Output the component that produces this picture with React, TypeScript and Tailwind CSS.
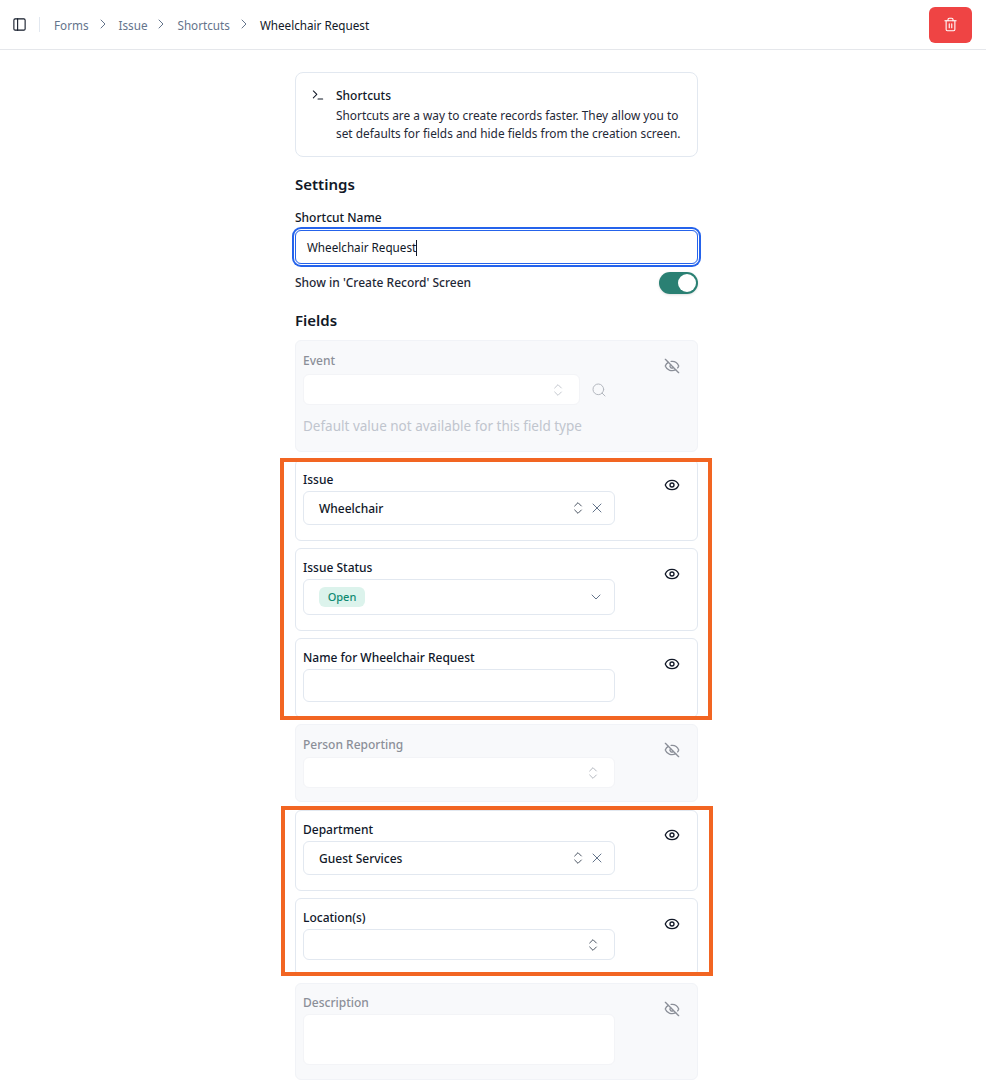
import { ChevronDown, ChevronRight, ChevronsUpDown, Eye, EyeOff, PanelLeft, Search, Terminal, Trash2, X } from "lucide-react";
import type { ReactNode } from "react";

function Crumb({ label, last }: { label: string; last?: boolean }) {
  if (last) return <span className="mt-[3px] text-[11.7px] text-[#111827]">{label}</span>;
  return (
    <>
      <span className="mt-[3px] text-[11.7px] text-[#64748b]">{label}</span>
      <ChevronRight size={16} strokeWidth={1.5} className="ml-[6px] mr-[8px] -mt-px text-[#64748b]" />
    </>
  );
}

function FieldCard({
  label,
  hidden,
  className,
  eyeClass,
  children,
}: {
  label: string;
  hidden?: boolean;
  className: string;
  eyeClass: string;
  children: ReactNode;
}) {
  const Icon = hidden ? EyeOff : Eye;
  return (
    <div
      className={`flex justify-between rounded-md border pl-[7px] pr-[17px] ${
        hidden ? "border-[#f1f3f7] bg-[#f8f9fb]" : "border-[#e2e8f0] bg-white"
      } ${className}`}
    >
      <div className="w-[312px]">
        <div className={`text-[12px] leading-[19px] font-medium ${hidden ? "text-[#8b8f98]" : "text-[#0f172a]"}`}>{label}</div>
        {children}
      </div>
      <Icon size={16} strokeWidth={2} className={`${eyeClass} ${hidden ? "text-[#8b8f98]" : "text-[#111827]"}`} />
    </div>
  );
}

function SelectBox({
  className,
  disabled,
  children,
}: {
  className: string;
  disabled?: boolean;
  children?: ReactNode;
}) {
  return (
    <div
      className={`flex items-center rounded-md border bg-white ${
        disabled ? "border-[#f3f4f7]" : "border-[#e2e8f0]"
      } ${className}`}
    >
      {children}
    </div>
  );
}

export default function App() {
  return (
    <div className="min-h-screen bg-white font-['Noto_Sans',sans-serif] text-[#111827]">
      <header className="flex h-[50px] items-center border-b border-[#e5e7eb] pl-[12px] pr-[14px]">
        <PanelLeft size={15} strokeWidth={1.75} className="text-[#111827]" />
        <div className="mx-[12px] h-[15px] w-px bg-[#e2e8f0]" />
        <nav className="ml-[2px] flex items-center">
          <Crumb label="Forms" />
          <Crumb label="Issue" />
          <Crumb label="Shortcuts" />
          <Crumb label="Wheelchair Request" last />
        </nav>
        <button className="ml-auto flex h-[36px] w-[43px] items-center justify-center rounded-md bg-[#ef4444]">
          <Trash2 size={15} strokeWidth={1.75} className="text-white" />
        </button>
      </header>

      <main className="relative ml-[295px] w-[403px] pt-[22px] pb-[4px]">
        <div className="flex h-[85px] rounded-lg border border-[#e2e8f0] pl-[15px] pt-[14px]">
          <Terminal size={14} strokeWidth={1.75} className="mt-px shrink-0 text-[#111827]" />
          <div className="ml-[11px] text-[11.85px] leading-[18px]">
            <div className="mb-px text-[12px] font-medium">Shortcuts</div>
            <div className="whitespace-nowrap text-[#1f2937]">Shortcuts are a way to create records faster. They allow you to</div>
            <div className="whitespace-nowrap text-[#1f2937]">set defaults for fields and hide fields from the creation screen.</div>
          </div>
        </div>

        <h2 className="mt-[16px] text-[15px] leading-[22px] font-semibold">Settings</h2>
        <div className="mt-[14px] text-[12px] leading-[18px] font-medium">Shortcut Name</div>
        <div className="mt-[3px] flex h-[34px] items-center rounded-md border border-[#2563eb] pl-[11px] pt-[2px] text-[11.7px] shadow-[0_0_0_1px_white,0_0_0_3px_#2563eb]">
          Wheelchair Request
          <span className="h-[16px] w-px bg-[#111827]" />
        </div>
        <div className="mt-[8px] flex items-center justify-between">
          <span className="text-[12px] font-medium text-[#1f2937]">Show in 'Create Record' Screen</span>
          <div className="flex h-[22px] w-[39px] items-center justify-end rounded-full bg-[#2a8073] pr-[2px] shadow-sm">
            <div className="size-[18px] rounded-full bg-white" />
          </div>
        </div>
        <h2 className="mt-[15px] text-[15px] leading-[22px] font-semibold">Fields</h2>

        <div className="mt-[9px] flex flex-col">
          <FieldCard label="Event" hidden className="h-[112px] pt-[10px]" eyeClass="mt-[7px]">
            <div className="mt-[4px] flex items-center">
              <SelectBox disabled className="h-[31px] w-[277px] justify-end bg-[#fbfbfd] pr-[13px]">
                <ChevronsUpDown size={16} strokeWidth={1.5} className="text-[#c4c8cf]" />
              </SelectBox>
              <Search size={16} strokeWidth={1.5} className="ml-[11px] text-[#b4b8bf]" />
            </div>
            <div className="mt-[11px] text-[13.5px] leading-[20px] whitespace-nowrap text-[#c0c5ce]">Default value not available for this field type</div>
          </FieldCard>

          <FieldCard label="Issue" className="mt-[7px] h-[82px] pt-[10px]" eyeClass="mt-[7px]">
            <SelectBox className="mt-[2px] h-[34px] pl-[15px] pr-[9px] text-[12px] font-medium">
              <span className="flex-1 pt-[2px]">Wheelchair</span>
              <ChevronsUpDown size={16} strokeWidth={1.5} className="text-[#4b5563]" />
              <X size={16} strokeWidth={1.5} className="ml-[3px] text-[#64748b]" />
            </SelectBox>
          </FieldCard>

          <FieldCard label="Issue Status" className="mt-[7px] h-[83px] pt-[9px]" eyeClass="mt-[8px]">
            <SelectBox className="mt-[2px] h-[36px] justify-between pl-[15px] pr-[10px]">
              <span className="flex h-[20px] w-[46px] items-center justify-center rounded-md bg-[#dcf3ec] text-[11px] font-medium text-[#0f8a72]">Open</span>
              <ChevronDown size={16} strokeWidth={1.5} className="text-[#64748b]" />
            </SelectBox>
          </FieldCard>

          <FieldCard label="Name for Wheelchair Request" className="mt-[7px] h-[80px] pt-[9px]" eyeClass="mt-[8px]">
            <SelectBox className="mt-[2px] h-[33px]" />
          </FieldCard>

          <FieldCard label="Person Reporting" hidden className="mt-[6px] h-[78px] pt-[10px]" eyeClass="mt-[7px]">
            <SelectBox disabled className="mt-[3px] h-[31px] justify-end pr-[13px]">
              <ChevronsUpDown size={16} strokeWidth={1.5} className="text-[#b4b8bf]" />
            </SelectBox>
          </FieldCard>

          <FieldCard label="Department" className="mt-[8px] h-[81px] pt-[9px]" eyeClass="mt-[7px]">
            <SelectBox className="mt-[2px] h-[34px] pl-[15px] pr-[9px] text-[12px] font-medium">
              <span className="flex-1 pt-[2px]">Guest Services</span>
              <ChevronsUpDown size={16} strokeWidth={1.5} className="text-[#4b5563]" />
              <X size={16} strokeWidth={1.5} className="ml-[3px] text-[#64748b]" />
            </SelectBox>
          </FieldCard>

          <FieldCard label="Location(s)" className="mt-[7px] h-[78px] pt-[9px]" eyeClass="mt-[8px]">
            <SelectBox className="mt-[2px] h-[31px] justify-end pr-[13px]">
              <ChevronsUpDown size={16} strokeWidth={1.5} className="text-[#4b5563]" />
            </SelectBox>
          </FieldCard>

          <FieldCard label="Description" hidden className="mt-[7px] h-[97px] pt-[9px]" eyeClass="mt-[8px]">
            <SelectBox disabled className="mt-[2px] h-[51px]" />
          </FieldCard>
        </div>

        {/* orange annotation boxes drawn over the screenshot */}
        <div className="pointer-events-none absolute top-[408px] -left-[15px] h-[262px] w-[432px] border-4 border-[#f26522]" />
        <div className="pointer-events-none absolute top-[756px] -left-[14px] h-[170px] w-[432px] border-4 border-[#f26522]" />
      </main>
    </div>
  );
}
